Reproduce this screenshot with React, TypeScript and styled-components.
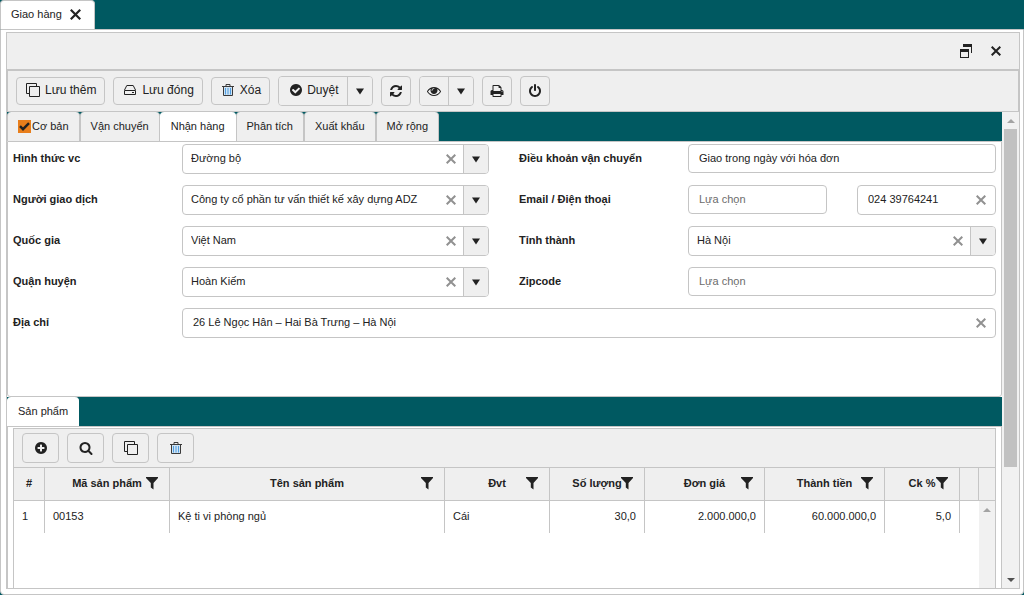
import React from "react";
import styled, { createGlobalStyle, css } from "styled-components";

const line = "#c5c5c5";
const teal = "#005961";
const chrome = "#efefef";
const ink = "#222222";

const GlobalStyle = createGlobalStyle`
  *, *::before, *::after { box-sizing: border-box; }
  html, body, #root { height: 100%; }
  body {
    margin: 0;
    background: ${teal};
    color: ${ink};
    font: 11px/16px "Liberation Sans", Arial, sans-serif;
  }
  button, input { font: inherit; color: inherit; }
  button { padding: 0; cursor: pointer; }
`;

const Page = styled.div`
  min-height: 100%;
  display: flex;
  flex-direction: column;
`;

const WindowTabs = styled.nav`
  display: flex;
  height: 29px;
  align-items: flex-end;
`;

const WindowTab = styled.div`
  display: flex;
  align-items: center;
  gap: 8px;
  height: 29px;
  padding: 0 13px 2px 10px;
  border: 1px solid ${line};
  border-bottom: 0;
  border-radius: 4px 4px 0 0;
  background: #fff;
`;

const IconButton = styled.button`
  display: inline-flex;
  align-items: center;
  justify-content: center;
  border: 0;
  background: none;
`;

const WindowBody = styled.div`
  flex: 1;
  display: flex;
  flex-direction: column;
  padding: 2px 3px 5px 5px;
  border: 1px solid ${line};
  border-radius: 0 0 4px 4px;
  background: #fff;
`;

const Frame = styled.div`
  flex: 1;
  display: flex;
  flex-direction: column;
  border: 1px solid ${line};
`;

const TitleBar = styled.header`
  display: flex;
  justify-content: flex-end;
  align-items: center;
  gap: 19px;
  height: 37px;
  padding-right: 18px;
  border-bottom: 1px solid ${line};
  background: ${chrome};
`;

const Toolbar = styled.div`
  display: flex;
  align-items: center;
  gap: 8px;
  height: 42px;
  padding: 0 8px;
  border: 1px solid ${line};
  background: ${chrome};
`;

const ToolButton = styled.button<{ $icon?: boolean; $wide?: boolean }>`
  display: flex;
  align-items: center;
  justify-content: center;
  gap: 5px;
  height: ${(p) => (p.$icon ? 30 : 28)}px;
  width: ${(p) => (p.$wide ? "37px" : p.$icon ? "30px" : "auto")};
  padding: ${(p) => (p.$icon ? "0" : "0 8px 2px 9px")};
  border: 1px solid ${line};
  border-radius: 4px;
  background: ${chrome};
  font-size: 12px;
  line-height: 14px;
`;

const Split = styled.div`
  display: flex;
  height: 30px;
  border: 1px solid ${line};
  border-radius: 4px;
  overflow: hidden;
  font-size: 12px;
`;

const SplitMain = styled.button<{ $icon?: boolean }>`
  display: flex;
  align-items: center;
  gap: 4px;
  padding: ${(p) => (p.$icon ? "0 7px" : "0 8px 2px 10px")};
  border: 0;
  background: ${chrome};
`;

const SplitSide = styled.button`
  display: flex;
  align-items: center;
  justify-content: center;
  width: 25px;
  border: 0;
  border-left: 1px solid ${line};
  background: ${chrome};
`;

const Workspace = styled.div`
  flex: 1;
  display: flex;
`;

const Content = styled.main`
  flex: 1;
  min-width: 0;
  display: flex;
  flex-direction: column;
`;

const TabStrip = styled.div`
  display: flex;
  height: 29px;
  background: ${teal};
`;

const Tab = styled.button<{ $active?: boolean }>`
  display: flex;
  align-items: center;
  gap: 1px;
  height: 29px;
  padding: 0 10px 1px;
  border: 1px solid ${line};
  border-width: 0 1px;
  border-radius: 4px 4px 0 0;
  background: ${chrome};
  white-space: nowrap;
  ${(p) =>
    p.$active &&
    css`
      height: 30px;
      padding-bottom: 2px;
      border-color: #fff;
      background: #fff;
    `}
`;

const TickBox = styled.span`
  display: flex;
  align-items: center;
  justify-content: center;
  width: 13px;
  height: 13px;
  background: #e87e1b;
`;

const Form = styled.form`
  display: grid;
  grid-template-columns: 169px minmax(0, 307fr) 30px 169px minmax(0, 308fr);
  row-gap: 11px;
  padding: 2px 5px 58px;
  border: 1px solid ${line};
  border-radius: 0 0 3px 3px;
`;

const Label = styled.label<{ $right?: boolean }>`
  grid-column: ${(p) => (p.$right ? 4 : 1)};
  padding-top: 6px;
  font-weight: bold;
`;

const FieldCell = styled.div<{ $right?: boolean; $full?: boolean }>`
  grid-column: ${(p) => (p.$full ? "2 / -1" : p.$right ? 5 : 2)};
  display: flex;
  align-items: flex-start;
  gap: 30px;
  height: 30px;
`;

const FieldBox = styled.div<{ $plain?: boolean }>`
  flex: 1;
  min-width: 0;
  display: flex;
  height: ${(p) => (p.$plain ? 29 : 30)}px;
  border: 1px solid ${line};
  border-radius: 4px;
  background: #fff;
  overflow: hidden;
`;

const FieldInput = styled.input<{ $inset?: boolean }>`
  flex: 1;
  min-width: 0;
  padding: 0 0 2px ${(p) => (p.$inset ? 10 : 8)}px;
  border: 0;
  outline: 0;
  background: none;
  &::placeholder { color: #6c6c6c; opacity: 1; }
`;

const ClearButton = styled(IconButton)<{ $end?: boolean }>`
  width: ${(p) => (p.$end ? 28 : 24)}px;
  color: #919191;
`;

const Bottom = styled.section`
  flex: 1;
  display: flex;
  flex-direction: column;
  padding: 1px 5px 0;
  border: 1px solid ${line};
  border-width: 1px 1px 0;
`;

const Grid = styled.div`
  flex: 1;
  display: flex;
  flex-direction: column;
  border: 1px solid ${line};
  border-bottom: 0;
`;

const GridTools = styled.div`
  display: flex;
  gap: 8px;
  align-items: center;
  height: 39px;
  padding: 0 8px;
  border-bottom: 1px solid ${line};
  background: ${chrome};
`;

const GridBody = styled.div`
  flex: 1;
  display: flex;
  align-items: stretch;
`;

const TableArea = styled.div`
  flex: 1;
  min-width: 0;
`;

const Table = styled.table`
  width: 100%;
  table-layout: fixed;
  border-collapse: separate;
  border-spacing: 0;
`;

const Th = styled.th`
  height: 33px;
  padding: 0 4px 2px;
  border-right: 1px solid ${line};
  border-bottom: 1px solid ${line};
  background: ${chrome};
`;

const ThInner = styled.span`
  display: grid;
  grid-template-columns: 26px minmax(0, 1fr) 26px;
  align-items: center;
  justify-items: center;
  white-space: nowrap;
  & > :first-child { grid-column: 2; }
`;

const Td = styled.td<{ $num?: boolean }>`
  height: 32px;
  padding: 0 8px 2px;
  border-right: 1px solid ${line};
  text-align: ${(p) => (p.$num ? "right" : "left")};
  white-space: nowrap;
  &:last-child { border-right: 0; }
`;

const Gutter = styled.div`
  width: 16px;
  display: flex;
  flex-direction: column;
`;

const GutterHead = styled.div`
  height: 33px;
  border-bottom: 1px solid ${line};
  background: ${chrome};
`;

const Track = styled.div`
  flex: 1;
  display: flex;
  flex-direction: column;
  align-items: center;
  background: #f1f1f1;
`;

const SideTrack = styled(Track)`
  flex: none;
  width: 17px;
`;

const Arrow = styled.span<{ $down?: boolean; $dim?: boolean }>`
  display: flex;
  align-items: center;
  justify-content: center;
  width: 17px;
  height: 17px;
  margin-top: ${(p) => (p.$down ? "auto" : "0")};
  color: ${(p) => (p.$dim ? "#a3a3a3" : "#505050")};
`;

const Thumb = styled.div`
  width: 13px;
  height: 71%;
  background: #c1c1c1;
`;

const fa: Record<string, string> = {
  refresh:
    "M1639 1056q0 5-1 7-64 268-268 434.500t-478 166.500q-146 0-282.500-55t-243.500-157l-129 129q-19 19-45 19t-45-19-19-45v-448q0-26 19-45t45-19h448q26 0 45 19t19 45-19 45l-137 137q71 66 161 102t187 36q134 0 250-65t186-179q11-17 53-117 8-23 30-23h192q13 0 22.500 9.500t9.500 22.500zm25-800v448q0 26-19 45t-45 19h-448q-26 0-45-19t-19-45 19-45l138-138q-148-137-349-137-134 0-250 65t-186 179q-11 17-53 117-8 23-30 23h-199q-13 0-22.500-9.500t-9.500-22.500v-7q65-268 270-434.500t480-166.500q146 0 284 55.500t245 156.500l130-129q19-19 45-19t45 19 19 45z",
  print:
    "M448 1536h896v-256h-896v256zm0-640h896v-384h-160q-40 0-68-28t-28-68v-160h-640v640zm1152 64q0-26-19-45t-45-19-45 19-19 45 19 45 45 19 45-19 19-45zm128 0v416q0 13-9.500 22.500t-22.500 9.500h-224v160q0 40-28 68t-68 28h-960q-40 0-68-28t-28-68v-160h-224q-13 0-22.500-9.500t-9.500-22.500v-416q0-79 56.500-135.500t135.500-56.500h64v-544q0-40 28-68t68-28h672q40 0 88 20t76 48l152 152q28 28 48 76t20 88v256h64q79 0 135.500 56.500t56.500 135.500z",
  power:
    "M1664 896q0 156-61 298t-164 245-245 164-298 61-298-61-245-164-164-245-61-298q0-182 80.500-343t226.500-270q43-32 95.500-25t83.500 50q32 42 24.500 94.500t-49.500 84.500q-98 74-151.500 181t-53.500 228q0 104 40.500 198.500t109.500 163.500 163.500 109.500 198.500 40.500 198.500-40.500 163.500-109.500 109.500-163.500 40.500-198.500q0-121-53.500-228t-151.500-181q-42-32-49.500-84.500t24.500-94.500q31-43 84-50t95 25q146 109 226.500 270t80.500 343zm-640-768v640q0 52-38 90t-90 38-90-38-38-90v-640q0-52 38-90t90-38 90 38 38 90z",
  eye:
    "M1664 960q-152-236-381-353 61 104 61 225 0 185-131.500 316.500t-316.500 131.500-316.500-131.500-131.500-316.500q0-121 61-225-229 117-381 353 133 205 333.500 326.500t434.500 121.500 434.500-121.500 333.500-326.500zm-720-384q0-20-14-34t-34-14q-125 0-214.500 89.500t-89.500 214.500q0 20 14 34t34 14 34-14 14-34q0-86 61-147t147-61q20 0 34-14t14-34zm848 384q0 34-20 69-140 230-376.500 368.500t-499.500 138.500-499.500-139-376.500-368q-20-35-20-69t20-69q140-229 376.500-368t499.500-139 499.500 139 376.500 368q20 35 20 69z",
  search:
    "M1216 832q0-185-131.500-316.500t-316.500-131.500-316.500 131.500-131.500 316.500 131.500 316.500 316.500 131.500 316.500-131.500 131.500-316.500zm512 832q0 52-38 90t-90 38q-54 0-90-38l-343-342q-179 124-399 124-143 0-273.500-55.500t-225-150-150-225-55.500-273.500 55.500-273.500 150-225 225-150 273.500-55.500 273.500 55.500 225 150 150 225 55.500 273.500q0 220-124 399l343 343q37 37 37 90z",
  plus:
    "M1344 960v-128q0-26-19-45t-45-19h-256v-256q0-26-19-45t-45-19h-128q-26 0-45 19t-19 45v256h-256q-26 0-45 19t-19 45v128q0 26 19 45t45 19h256v256q0 26 19 45t45 19h128q26 0 45-19t19-45v-256h256q26 0 45-19t19-45zm320-64q0 209-103 385.500t-279.500 279.500-385.500 103-385.500-103-279.500-279.500-103-385.500 103-385.500 279.500-279.500 385.500-103 385.500 103 279.500 279.500 103 385.500z",
  check:
    "M1412 734q0-28-18-46l-91-90q-19-19-45-19t-45 19l-408 407-226-226q-19-19-45-19t-45 19l-91 90q-18 18-18 46 0 27 18 45l362 362q19 19 45 19 27 0 46-19l543-543q18-18 18-45zm252 162q0 209-103 385.500t-279.500 279.500-385.500 103-385.500-103-279.500-279.500-103-385.500 103-385.500 279.500-279.500 385.500-103 385.500 103 279.500 279.500 103 385.500z",
};

const Glyph = ({ name, size = 14 }: { name: string; size?: number }) => (
  <svg width={size} height={size} viewBox="0 0 1792 1792" fill="currentColor" aria-hidden="true">
    <path d={fa[name]} />
  </svg>
);

const Cross = ({ size = 10, weight = 2 }: { size?: number; weight?: number }) => (
  <svg width={size} height={size} viewBox="0 0 10 10" fill="none" stroke="currentColor" strokeWidth={weight} aria-hidden="true">
    <path d="M.7.7l8.600 8.600M9.300.7L.7 9.300" />
  </svg>
);

const Caret = () => (
  <svg width="8" height="7" viewBox="0 0 8 7" fill="currentColor" aria-hidden="true">
    <path d="M0 .5h8L4 6.500z" />
  </svg>
);

const Funnel = () => (
  <svg width="12" height="14" viewBox="0 0 12 14" fill="currentColor" aria-hidden="true">
    <path d="M0 1h12v1L7.500 7V13.500L4.800 11.500V7L0 2z" />
  </svg>
);

const CopyIcon = () => (
  <svg width="14" height="14" viewBox="0 0 14 14" fill="none" stroke="currentColor" aria-hidden="true">
    <path d="M3.500 3.500h10v10h-10zM10.500 3V.5H.5v10h3" />
  </svg>
);

const DriveIcon = () => (
  <svg width="14" height="12" viewBox="0 0 14 12" fill="none" stroke="currentColor" aria-hidden="true">
    <path d="M1.500 6L3.800 1.500h6.400L12.500 6M1.500 6.500h11v4h-11zM9 8.500h2" />
  </svg>
);

const TrashIcon = () => (
  <svg width="14" height="12" viewBox="0 0 14 12" fill="none" aria-hidden="true">
    <path d="M2.500 3h9v8.500h-9z" fill="#cfe3f3" />
    <path d="M4.500 4v6.500M7 4v6.500M9.500 4v6.500" stroke="#4f9de0" />
    <path d="M5 2V.5h4V2M1 2.500h12M2.500 3v8.500h9V3" stroke="#3a3a3a" />
  </svg>
);

const RestoreIcon = () => (
  <svg width="12" height="14" viewBox="0 0 12 14" fill="none" aria-hidden="true">
    <path d="M3 0h9v9h-1V3H3zM0 5h9v9H0zm1 3v5h7V8z" fill={ink} fillRule="evenodd" />
  </svg>
);

const ScrollArrow = ({ down, dim }: { down?: boolean; dim?: boolean }) => (
  <Arrow $down={down} $dim={dim}>
    <svg width="8" height="4" viewBox="0 0 8 4" fill="currentColor" aria-hidden="true">
      <path d={down ? "M0 0h8L4 4z" : "M0 4h8L4 0z"} />
    </svg>
  </Arrow>
);

type FieldProps = {
  id: string;
  value?: string;
  combo?: boolean;
  clear?: boolean;
  label?: string;
};

const Field = ({ id, value, combo, clear, label }: FieldProps) => (
  <FieldBox $plain={!combo && !clear}>
    <FieldInput id={id} defaultValue={value} placeholder="Lựa chọn" aria-label={label} $inset={!combo} />
    {(combo || clear) && (
      <ClearButton type="button" aria-label="Xóa giá trị" $end={!combo}>
        <Cross />
      </ClearButton>
    )}
    {combo ? (
      <SplitSide type="button" aria-label="Mở danh sách">
        <Caret />
      </SplitSide>
    ) : null}
  </FieldBox>
);

const tabs = ["Cơ bản", "Vận chuyển", "Nhận hàng", "Phân tích", "Xuất khẩu", "Mở rộng"];

const columns = [
  { title: "#", width: 31, filter: false },
  { title: "Mã sản phẩm", width: 125, filter: true },
  { title: "Tên sản phẩm", width: undefined, filter: true },
  { title: "Đvt", width: 105, filter: true },
  { title: "Số lượng", width: 95, filter: true },
  { title: "Đơn giá", width: 120, filter: true },
  { title: "Thành tiền", width: 120, filter: true },
  { title: "Ck %", width: 75, filter: true },
  { title: "", width: 19, filter: false },
];

const rows = [["1", "00153", "Kệ ti vi phòng ngủ", "Cái", "30,0", "2.000.000,0", "60.000.000,0", "5,0", ""]];

export default function App() {
  return (
    <Page>
      <GlobalStyle />
      <WindowTabs>
        <WindowTab>
          Giao hàng
          <IconButton aria-label="Đóng thẻ">
            <Cross size={11} />
          </IconButton>
        </WindowTab>
      </WindowTabs>
      <WindowBody>
        <Frame>
          <TitleBar>
            <IconButton aria-label="Khôi phục">
              <RestoreIcon />
            </IconButton>
            <IconButton aria-label="Đóng">
              <Cross />
            </IconButton>
          </TitleBar>
          <Toolbar>
            <ToolButton><CopyIcon />Lưu thêm</ToolButton>
            <ToolButton><DriveIcon />Lưu đóng</ToolButton>
            <ToolButton><TrashIcon />Xóa</ToolButton>
            <Split>
              <SplitMain><Glyph name="check" />Duyệt</SplitMain>
              <SplitSide aria-label="Tùy chọn duyệt"><Caret /></SplitSide>
            </Split>
            <ToolButton $icon aria-label="Tải lại"><Glyph name="refresh" /></ToolButton>
            <Split>
              <SplitMain $icon aria-label="Xem"><Glyph name="eye" /></SplitMain>
              <SplitSide aria-label="Tùy chọn xem"><Caret /></SplitSide>
            </Split>
            <ToolButton $icon aria-label="In"><Glyph name="print" /></ToolButton>
            <ToolButton $icon aria-label="Thoát"><Glyph name="power" /></ToolButton>
          </Toolbar>
          <Workspace>
            <Content>
              <TabStrip role="tablist">
                {tabs.map((t, i) => (
                  <Tab key={t} role="tab" aria-selected={i === 2} $active={i === 2}>
                    {i === 0 && (
                      <TickBox>
                        <svg width="11" height="9" viewBox="0 0 11 9" fill="none" stroke={ink} strokeWidth="2.400" aria-hidden="true">
                          <path d="M1 4.200l3 3L10 1.200" />
                        </svg>
                      </TickBox>
                    )}
                    {t}
                  </Tab>
                ))}
              </TabStrip>
              <Form>
                <Label htmlFor="mode">Hình thức vc</Label>
                <FieldCell><Field id="mode" value="Đường bộ" combo /></FieldCell>
                <Label htmlFor="terms" $right>Điều khoản vận chuyển</Label>
                <FieldCell $right><Field id="terms" value="Giao trong ngày với hóa đơn" /></FieldCell>

                <Label htmlFor="partner">Người giao dịch</Label>
                <FieldCell><Field id="partner" value="Công ty cổ phần tư vấn thiết kế xây dựng ADZ" combo /></FieldCell>
                <Label htmlFor="email" $right>Email / Điện thoại</Label>
                <FieldCell $right>
                  <Field id="email" />
                  <Field id="phone" value="024 39764241" label="Điện thoại" clear />
                </FieldCell>

                <Label htmlFor="country">Quốc gia</Label>
                <FieldCell><Field id="country" value="Việt Nam" combo /></FieldCell>
                <Label htmlFor="city" $right>Tỉnh thành</Label>
                <FieldCell $right><Field id="city" value="Hà Nội" combo /></FieldCell>

                <Label htmlFor="district">Quận huyện</Label>
                <FieldCell><Field id="district" value="Hoàn Kiếm" combo /></FieldCell>
                <Label htmlFor="zip" $right>Zipcode</Label>
                <FieldCell $right><Field id="zip" /></FieldCell>

                <Label htmlFor="address">Địa chỉ</Label>
                <FieldCell $full><Field id="address" value="26 Lê Ngọc Hân – Hai Bà Trưng – Hà Nội" clear /></FieldCell>
              </Form>
              <TabStrip role="tablist">
                <Tab role="tab" aria-selected $active>Sản phẩm</Tab>
              </TabStrip>
              <Bottom>
                <Grid>
                  <GridTools>
                    <ToolButton $icon $wide aria-label="Thêm"><Glyph name="plus" /></ToolButton>
                    <ToolButton $icon $wide aria-label="Tìm"><Glyph name="search" /></ToolButton>
                    <ToolButton $icon $wide aria-label="Sao chép"><CopyIcon /></ToolButton>
                    <ToolButton $icon $wide aria-label="Xóa dòng"><TrashIcon /></ToolButton>
                  </GridTools>
                  <GridBody>
                    <TableArea>
                      <Table>
                        <colgroup>
                          {columns.map((c, i) => <col key={i} width={c.width} />)}
                        </colgroup>
                        <thead>
                          <tr>
                            {columns.map((c, i) => (
                              <Th key={i}>
                                {c.filter ? (
                                  <ThInner>
                                    <span>{c.title}</span>
                                    <IconButton aria-label={`Lọc ${c.title}`}><Funnel /></IconButton>
                                  </ThInner>
                                ) : c.title}
                              </Th>
                            ))}
                          </tr>
                        </thead>
                        <tbody>
                          {rows.map((r) => (
                            <tr key={r[0]}>
                              {r.map((v, i) => <Td key={i} $num={i > 3}>{v}</Td>)}
                            </tr>
                          ))}
                        </tbody>
                      </Table>
                    </TableArea>
                    <Gutter>
                      <GutterHead />
                      <Track><ScrollArrow dim /></Track>
                    </Gutter>
                  </GridBody>
                </Grid>
              </Bottom>
            </Content>
            <SideTrack>
              <ScrollArrow dim />
              <Thumb />
              <ScrollArrow down />
            </SideTrack>
          </Workspace>
        </Frame>
      </WindowBody>
    </Page>
  );
}
